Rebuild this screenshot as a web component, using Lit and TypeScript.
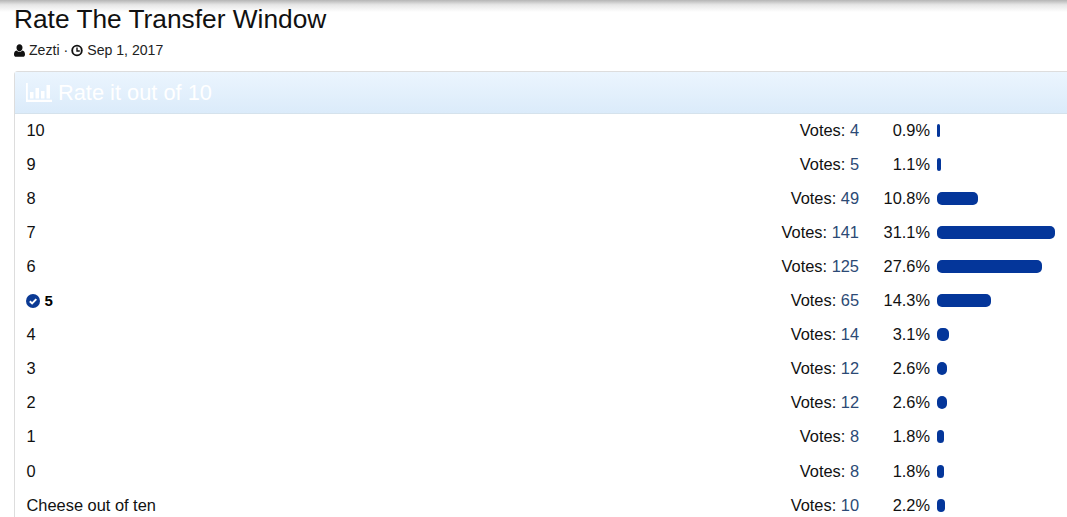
import { LitElement, html, css, svg } from "lit";
import { customElement } from "lit/decorators.js";

const rows = [
  ["10", 4, 0.9],
  ["9", 5, 1.1],
  ["8", 49, 10.8],
  ["7", 141, 31.1],
  ["6", 125, 27.6],
  ["5", 65, 14.3, true],
  ["4", 14, 3.1],
  ["3", 12, 2.6],
  ["2", 12, 2.6],
  ["1", 8, 1.8],
  ["0", 8, 1.8],
  ["Cheese out of ten", 10, 2.2],
] as [string, number, number, boolean?][];

@customElement("app-root")
export class AppRoot extends LitElement {
  static styles = css`
    :host {
      display: block;
      width: 1067px;
      height: 517px;
      overflow: hidden;
      background: #fff;
      font-family: "Liberation Sans", Arial, sans-serif;
      color: #111;
    }
    .shade {
      height: 12px;
      margin-bottom: -12px;
      background: linear-gradient(#b5b5b5, #e6e6e6 40%, #ffffff);
    }
    .page {
      position: relative;
      padding: 4px 0 0 14px;
    }
    h1 {
      margin: 0;
      font-size: 26.3px;
      line-height: 30px;
      font-weight: 400;
      color: #111;
    }
    .meta {
      display: flex;
      align-items: center;
      height: 20px;
      margin-top: 6px;
      font-size: 14.1px;
      color: #222;
    }
    .meta svg {
      display: block;
      height: 13px;
    }
    .person {
      width: 11px;
      margin-right: 4px;
    }
    .clock {
      width: 12px;
      margin-right: 4px;
    }
    .dot {
      margin: 0 3px 0 4px;
    }
    .panel {
      margin-top: 11px;
      width: 1092px;
      border-left: 1px solid #ddd;
      border-top: 1px solid #ddd;
      border-radius: 4px 0 0 0;
    }
    .head {
      display: flex;
      align-items: center;
      box-sizing: border-box;
      height: 42px;
      margin-bottom: -0.75px;
      padding: 0 0 0 11px;
      background: linear-gradient(#ebf5fe, #dbebfa);
      border-bottom: 1px solid #d5e2ec;
      color: #fff;
      font-size: 21.8px;
    }
    .head svg {
      width: 26px;
      height: 19px;
      margin-right: 6px;
    }
    .row {
      display: flex;
      align-items: center;
      height: 34.09px;
      padding-left: 11.5px;
      font-size: 16.4px;
      color: #111;
    }
    .label {
      flex: 1;
      display: flex;
      align-items: center;
    }
    .sel {
      font-weight: 700;
      font-size: 15px;
      color: #000;
    }
    .check {
      width: 14px;
      height: 14px;
      margin: 0 5px 0 -1px;
    }
    .votes {
      width: 160px;
      text-align: right;
    }
    .votes b {
      font-weight: 400;
      color: #2c4a75;
    }
    .pct {
      width: 71px;
      text-align: right;
    }
    .track {
      width: 170px;
      margin-left: 7px;
    }
    .bar {
      height: 13px;
      border-radius: 5px;
      background: #04369a;
    }
  `;

  render() {
    return html`
      <div class="shade"></div>
      <div class="page">
        <h1>Rate The Transfer Window</h1>
        <div class="meta">
          <svg class="person" viewBox="0 0 11 13"><path fill="#111" d="M5.500 0.300c1.800 0 3 1.500 3 3.400S7.300 7.200 5.500 7.200 2.500 5.600 2.500 3.700 3.700 0.300 5.500 0.300zM2.600 6.500c.8.800 1.800 1.300 2.900 1.300s2.100-.5 2.900-1.300c1.800.2 2.600 2 2.600 3.900 0 1.500-.9 2.300-2.100 2.300H2.100C.9 12.700 0 11.900 0 10.400c0-1.900.8-3.700 2.600-3.900z"/></svg>
          <span>Zezti</span><span class="dot">·</span>
          <svg class="clock" viewBox="0 0 13 13"><circle cx="6.500" cy="6.500" r="5.200" fill="none" stroke="#111" stroke-width="2"/><path d="M6.500 3.200v3.800h3" fill="none" stroke="#111" stroke-width="1.500"/></svg>
          <span>Sep 1, 2017</span>
        </div>
        <div class="panel">
          <div class="head">
            <svg viewBox="0 0 26 19">
              <path fill="#fff" d="M0 0h1.800v16.800H26V19H0z"/>
              <path fill="#fff" d="M4 9h3.500v6.500H4zM9.500 5h3.500v10.500H9.500zM15 8h3.500v7.500H15zM20.500 2H24v13.500h-3.500z"/>
            </svg>
            <span>Rate it out of 10</span>
          </div>
          ${rows.map(([label, votes, pct, sel]) => html`
            <div class="row">
              <div class="label ${sel ? "sel" : ""}">
                ${sel ? svg`<svg class="check" viewBox="0 0 14 14"><circle cx="7" cy="7" r="7" fill="#0b3a94"/><path d="M3.800 7.200l2.300 2.200 4.200-4.300" fill="none" stroke="#fff" stroke-width="2"/></svg>` : ""}
                <span>${label}</span>
              </div>
              <div class="votes">Votes: <b>${votes}</b></div>
              <div class="pct">${pct.toFixed(1)}%</div>
              <div class="track"><div class="bar" style="width:${(pct * 3.8).toFixed(1)}px"></div></div>
            </div>
          `)}
        </div>
      </div>
    `;
  }
}
